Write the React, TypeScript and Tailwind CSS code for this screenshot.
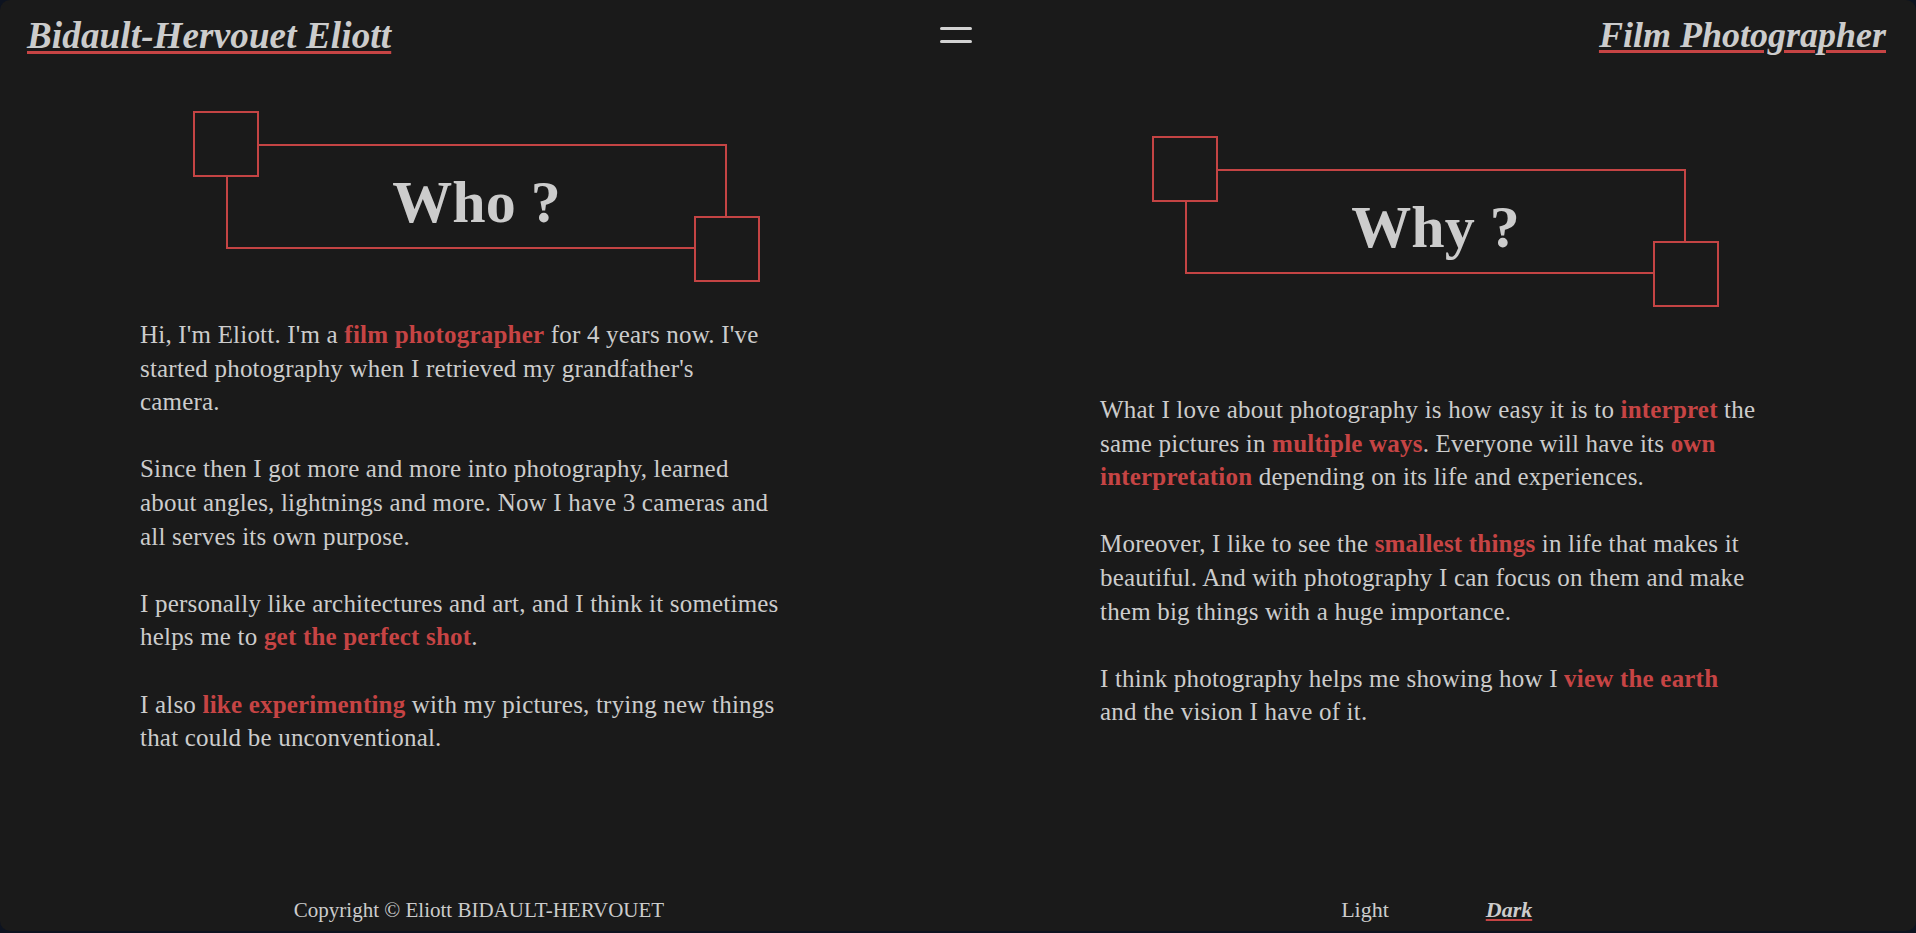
import React from "react";

function Hl({ children }: { children: React.ReactNode }) {
  return <strong className="font-bold text-[#c64444]">{children}</strong>;
}

function TitleBox({ label, className }: { label: string; className?: string }) {
  return (
    <div className={"relative w-[567px] h-[171px] p-[33px] " + (className ?? "")}>
      <div className="w-[501px] h-[105px] border-2 border-[#c44444] flex items-center justify-center pt-[10px]">
        <span className="text-[60px] font-bold leading-none text-[#cccccc]">{label}</span>
      </div>
      <div className="absolute left-0 top-0 w-[66px] h-[66px] border-2 border-[#c44444] bg-[#1a1a1a]" />
      <div className="absolute left-[501px] top-[105px] w-[66px] h-[66px] border-2 border-[#c44444] bg-[#1a1a1a]" />
    </div>
  );
}

const body =
  "w-[670px] text-[25px] leading-[33.6px] tracking-[0.2px] flex flex-col gap-[33.6px]";

export default function App() {
  return (
    <div className="w-full h-[933px] bg-[#0d1320] font-['Liberation_Serif','Times_New_Roman',serif]">
      <div className="h-[931px] rounded-[10px] bg-[#1a1a1a] flex flex-col text-[#cccccc] overflow-hidden">
        {/* header */}
        <header className="h-[76px] grid grid-cols-3 items-start pl-[27px] pr-[30px] pt-[17px]">
          <a className="justify-self-start text-[37px] leading-none font-bold italic tracking-[0.15px] underline decoration-[#c64444] decoration-[3px] underline-offset-[3px]">
            Bidault-Hervouet Eliott
          </a>
          <button className="justify-self-center mt-[10px] flex flex-col gap-[10px]" aria-label="menu">
            <span className="block w-[32px] h-[3px] rounded-full bg-[#d2d2d2]" />
            <span className="block w-[32px] h-[3px] rounded-full bg-[#d2d2d2]" />
          </button>
          <a className="justify-self-end text-[36px] leading-none font-bold italic underline decoration-[#c64444] decoration-[3px] underline-offset-[3px]">
            Film Photographer
          </a>
        </header>

        {/* main */}
        <main className="flex-1 grid grid-cols-2">
          <section className="flex flex-col">
            <TitleBox label="Who ?" className="ml-[193px] mt-[35px]" />
            <div className={"ml-[140px] mt-[36px] " + body}>
              <p>
                Hi, I'm Eliott. I'm a <Hl>film photographer</Hl> for 4 years now. I've started photography when I retrieved my grandfather's
                <br />
                camera.
              </p>
              <p>
                Since then I got more and more into photography, learned
                <br />
                about angles, lightnings and more. Now I have 3 cameras and
                <br />
                all serves its own purpose.
              </p>
              <p>
                I personally like architectures and art, and I think it sometimes helps me to <Hl>get the perfect shot</Hl>.
              </p>
              <p>
                I also <Hl>like experimenting</Hl> with my pictures, trying new things that could be unconventional.
              </p>
            </div>
          </section>
          <section className="flex flex-col">
            <TitleBox label="Why ?" className="ml-[194px] mt-[60px]" />
            <div className={"ml-[142px] mt-[86px] " + body}>
              <p>
                What I love about photography is how easy it is to <Hl>interpret</Hl> the same pictures in <Hl>multiple ways</Hl>. Everyone will have its <Hl>own interpretation</Hl> depending on its life and experiences.
              </p>
              <p>
                Moreover, I like to see the <Hl>smallest things</Hl> in life that makes it beautiful. And with photography I can focus on them and make them big things with a huge importance.
              </p>
              <p>
                I think photography helps me showing how I <Hl>view the earth</Hl>
                <br />
                and the vision I have of it.
              </p>
            </div>
          </section>
        </main>

        {/* footer */}
        <footer className="h-[33px] grid grid-cols-2 text-[21px] leading-[24px]">
          <div className="flex justify-center">
            <span>Copyright © Eliott BIDAULT-HERVOUET</span>
          </div>
          <div className="flex justify-center text-[22px]">
            <span className="w-[144px] text-center">Light</span>
            <span className="w-[144px] text-center">
              <span className="font-bold italic underline decoration-[#c64444] decoration-[2px] underline-offset-[2px]">Dark</span>
            </span>
          </div>
        </footer>
      </div>
    </div>
  );
}
